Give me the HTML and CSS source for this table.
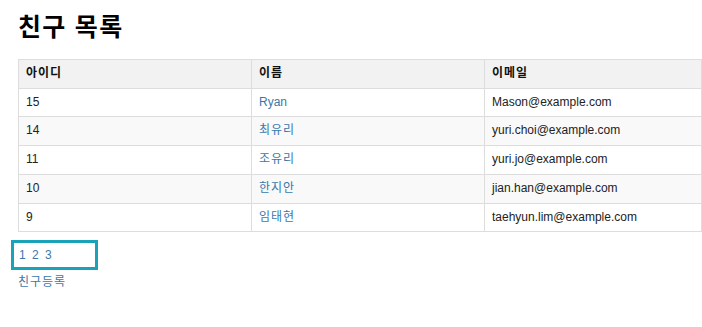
FILE: index.html
```html
<!DOCTYPE html>
<html lang="ko">
<head>
<meta charset="utf-8">
<title>친구 목록</title>
<link rel="stylesheet" href="styles.css">
</head>
<body>
<div class="page">
  <h1 class="title">친구 목록</h1>
  <table class="friends">
    <colgroup>
      <col class="c-id">
      <col class="c-name">
      <col class="c-mail">
    </colgroup>
    <thead>
      <tr><th class="ko">아이디</th><th class="ko">이름</th><th class="ko">이메일</th></tr>
    </thead>
    <tbody>
      <tr><td>15</td><td><a href="#">Ryan</a></td><td>Mason@example.com</td></tr>
      <tr><td>14</td><td><a class="ko" href="#">최유리</a></td><td>yuri.choi@example.com</td></tr>
      <tr><td>11</td><td><a class="ko" href="#">조유리</a></td><td>yuri.jo@example.com</td></tr>
      <tr><td>10</td><td><a class="ko" href="#">한지안</a></td><td>jian.han@example.com</td></tr>
      <tr><td>9</td><td><a class="ko" href="#">임태현</a></td><td>taehyun.lim@example.com</td></tr>
    </tbody>
  </table>
  <div class="pager">
    <a href="#">1</a><a href="#">2</a><a href="#">3</a>
  </div>
  <a class="register ko" href="#">친구등록</a>
</div>
</body>
</html>
```

FILE: styles.css
```css
html, body {
  margin: 0;
  padding: 0;
  background: #fff;
  overflow: hidden;
}
body {
  font-family: "Liberation Sans", Arial, "Noto Sans CJK KR", sans-serif;
  font-size: 12px;
  color: #222;
}
.page {
  padding: 13px 0 0 18px;
}
.title {
  margin: 0 0 18px 0;
  font-size: 25px;
  line-height: 28px;
  letter-spacing: 1.3px;
  font-weight: bold;
  color: #000;
}
.ko {
  letter-spacing: 1px;
}
.friends {
  width: 100%;
  border-collapse: collapse;
  table-layout: fixed;
}
.c-id, .c-name { width: 233px; }
.friends th, .friends td {
  border: 1px solid #ddd;
  padding: 7px 6px 7px 7px;
  line-height: 13.7px;
  text-align: left;
}
.friends th {
  background: #f2f2f2;
  font-weight: bold;
  color: #111;
}
.friends tbody tr:nth-child(even) td {
  background: #f9f9f9;
}
a {
  color: #3a78ab;
  text-decoration: none;
}
.pager {
  display: flex;
  gap: 6.3px;
  width: 76px;
  margin: 8px 0 0 -7px;
  padding: 5px 0 5px 5px;
  border: 3px solid #1aa3b8;
  line-height: 14px;
}
.register {
  display: block;
  margin-top: 5px;
  line-height: 14px;
}
```
